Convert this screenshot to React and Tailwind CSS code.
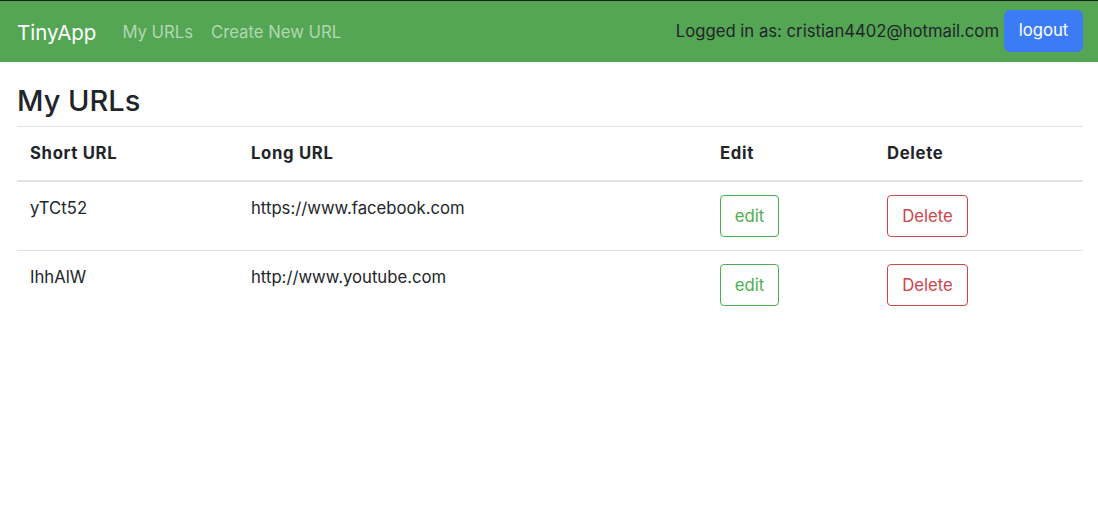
import React from 'react';

const urls = [
  { short: 'yTCt52', long: 'https://www.facebook.com' },
  { short: 'IhhAlW', long: 'http://www.youtube.com' },
];

const App = () => {
  return (
    <div className="min-h-[530px] bg-white text-[#212529] font-['Inter','Noto_Sans',sans-serif] text-[16.7px]">
      {/* Navbar */}
      <nav className="border-t border-[#1f1f1f] bg-[#54a654] h-[62px] flex items-center pl-[17px] pr-[15px]">
        <span className="text-white text-[20.5px] leading-[30px] mt-[2px]">TinyApp</span>
        <a className="ml-[26px] mt-[2px] text-[#b2d8b2]">My URLs</a>
        <a className="ml-[18px] mt-[2px] text-[#b2d8b2]">Create New URL</a>
        <div className="ml-auto flex items-center">
          <span className="text-[#212529]">Logged in as: cristian4402@hotmail.com</span>
          <button className="ml-[5px] mb-[1px] h-[42px] w-[79px] rounded-[6px] bg-[#3b7cf6] text-white">
            logout
          </button>
        </div>
      </nav>

      <main className="px-[17px]">
        <h3 className="mt-[22px] mb-[8px] text-[29px] leading-[34px] font-medium">My URLs</h3>

        <table className="w-[1066px] table-fixed border-collapse">
          <colgroup>
            <col className="w-[221px]" />
            <col className="w-[469px]" />
            <col className="w-[167px]" />
            <col className="w-[209px]" />
          </colgroup>
          <thead>
            <tr className="border-t border-[#dee2e6] border-b-2 border-b-[#dee2e6]">
              <th className="text-left font-bold tracking-[0.04em] pl-[13px] h-[54px]">Short URL</th>
              <th className="text-left font-bold tracking-[0.04em] pl-[13px]">Long URL</th>
              <th className="text-left font-bold tracking-[0.04em] pl-[13px]">Edit</th>
              <th className="text-left font-bold tracking-[0.04em] pl-[13px]">Delete</th>
            </tr>
          </thead>
          <tbody>
            {urls.map((u, i) => (
              <tr key={u.short} className={i === 0 ? 'border-b border-[#dee2e6]' : ''}>
                <td className="align-top pl-[13px] pt-[14px] leading-6">{u.short}</td>
                <td className="align-top pl-[13px] pt-[14px] leading-6">{u.long}</td>
                <td className="align-top pl-[13px] py-[13px]">
                  <button className="h-[42px] w-[59px] pt-[2px] rounded-[4px] border border-[#4caf50] text-[#4caf50]">
                    edit
                  </button>
                </td>
                <td className="align-top pl-[13px] py-[13px]">
                  <button className="h-[42px] w-[81px] pt-[2px] rounded-[4px] border border-[#d0434b] text-[#d0434b]">
                    Delete
                  </button>
                </td>
              </tr>
            ))}
          </tbody>
        </table>
      </main>
    </div>
  );
};

export default App;
